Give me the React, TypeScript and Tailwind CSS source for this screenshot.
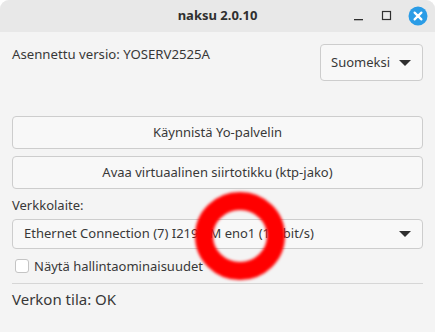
import React, { useState } from 'react';

const font = { fontFamily: '"Noto Sans", "Open Sans", sans-serif' };

export default function App() {
  const [showAdmin, setShowAdmin] = useState(false);

  return (
    <div className="w-[435px] h-[332px] bg-white overflow-hidden text-[13px] text-[#383838]" style={font}>
      <div className="relative h-full flex flex-col rounded-t-[9px] overflow-hidden bg-[#f4f4f4]">
        {/* title bar */}
        <div className="h-[32px] shrink-0 bg-[#e8e8e8] flex items-center justify-center relative">
          <span className="font-bold text-[13px] text-[#2f2f2f]">naksu 2.0.10</span>
          <div className="absolute right-[7px] top-0 h-full flex items-center gap-[14px]">
            <svg width="14" height="14" viewBox="0 0 14 14">
              <rect x="2" y="10" width="9" height="1.3" fill="#2f2f2f" />
            </svg>
            <svg width="14" height="14" viewBox="0 0 14 14">
              <rect x="2.5" y="2.5" width="8" height="8" fill="none" stroke="#2f2f2f" strokeWidth="1.2" />
            </svg>
            <svg width="20" height="20" viewBox="0 0 20 20">
              <circle cx="10" cy="10" r="9.5" fill="#2a9ce6" />
              <path d="M6.6 6.6 L13.4 13.4 M13.4 6.6 L6.6 13.4" stroke="white" strokeWidth="2.2" strokeLinecap="round" />
            </svg>
          </div>
        </div>

        {/* content */}
        <div className="flex flex-col px-[12px] pt-[12px]">
          <div className="flex items-start justify-between">
            <span className="pt-[1px] text-[13.2px]">Asennettu versio: YOSERV2525A</span>
            <button className="w-[103px] h-[37px] rounded-[4px] border border-[#cdcdcd] bg-[#f8f8f8] flex items-center justify-between pl-[10px] pr-[11px]">
              <span>Suomeksi</span>
              <svg width="12" height="6" viewBox="0 0 12 6"><path d="M0 0 H12 L6 6 Z" fill="#2f2f2f" /></svg>
            </button>
          </div>

          <button className="mt-[35px] h-[33px] rounded-[4px] border border-[#cdcdcd] bg-[#f8f8f8] flex items-center justify-center">
            Käynnistä Yo-palvelin
          </button>
          <button className="mt-[7px] h-[33px] rounded-[4px] border border-[#cdcdcd] bg-[#f8f8f8] flex items-center justify-center">
            Avaa virtuaalinen siirtotikku (ktp-jako)
          </button>

          <span className="mt-[7px] leading-[18px]">Verkkolaite:</span>
          <button className="mt-[5px] h-[30px] rounded-[4px] border border-[#cdcdcd] bg-[#f8f8f8] flex items-center justify-between pl-[11px] pr-[11px]">
            <span>Ethernet Connection (7) I219-LM eno1 (1 Gbit/s)</span>
            <svg width="12" height="6" viewBox="0 0 12 6"><path d="M0 0 H12 L6 6 Z" fill="#2f2f2f" /></svg>
          </button>

          <label className="mt-[10px] ml-[3px] flex items-center gap-[5px] leading-[14px]">
            <input
              type="checkbox"
              checked={showAdmin}
              onChange={e => setShowAdmin(e.target.checked)}
              className="appearance-none w-[14px] h-[14px] rounded-[3px] border border-[#c4c4c4] bg-white"
            />
            <span>Näytä hallintaominaisuudet</span>
          </label>

          <div className="mt-[10px] h-px bg-[#d6d6d6]" />
          <span className="mt-[4px] text-[15px] leading-[22px]">Verkon tila: OK</span>
        </div>

        {/* red annotation circle */}
        <svg className="absolute left-[190px] top-[185px] pointer-events-none" width="104" height="104" viewBox="0 0 104 104">
          <defs>
            <filter id="soft" x="-20%" y="-20%" width="140%" height="140%">
              <feGaussianBlur stdDeviation="1.4" />
            </filter>
          </defs>
          <ellipse cx="50" cy="51" rx="36" ry="35" fill="none" stroke="#ff0000" strokeWidth="18" filter="url(#soft)" />
        </svg>
      </div>
    </div>
  );
}
